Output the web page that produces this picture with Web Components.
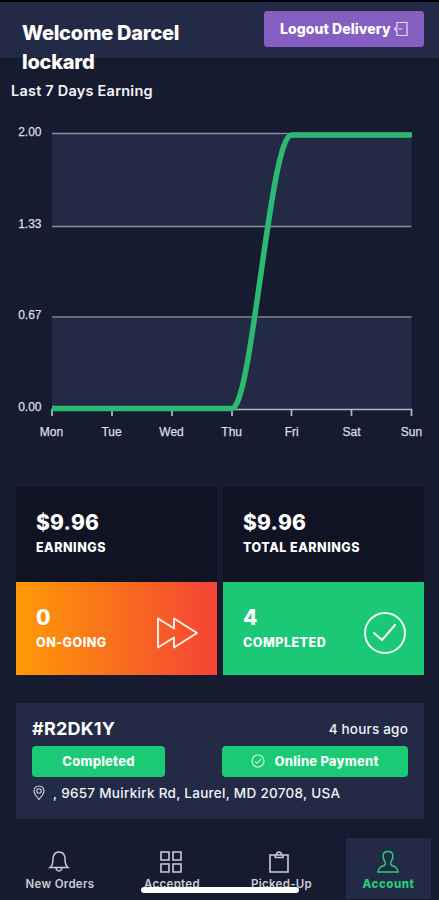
<!DOCTYPE html>
<html lang="en">
<head>
<meta charset="utf-8">
<title>Delivery account</title>
<style>
html,body{margin:0;padding:0}
body{background:#161b30;font-family:Inter,"Liberation Sans",sans-serif;color:#f2f3f8;width:439px;height:900px;overflow:hidden}
</style>
</head>
<body>
<delivery-app></delivery-app>
<script>
function define(name, html){
  const t=document.createElement('template');
  t.innerHTML=html;
  customElements.define(name, class extends HTMLElement{
    constructor(){super();this.attachShadow({mode:'open'}).appendChild(t.content.cloneNode(true));}
  });
}

define('app-header', `
<style>
:host{display:flex;justify-content:space-between;align-items:flex-start;box-sizing:border-box;height:58px;padding:11px 15px 0 22px;background:#232a45;border-top:2px solid #020308}
h1{margin:6px 0 0;width:190px;font-size:20px;line-height:28.5px;font-weight:800;letter-spacing:-.25px;color:#fff}
button{display:flex;align-items:center;gap:2px;box-sizing:border-box;width:160px;height:36px;margin:-2px 0 0;padding:0 15px 0 16px;border:0;border-radius:3px;background:#845fc1;color:#fff;font:800 14px/36px Inter,sans-serif;letter-spacing:.08px;white-space:nowrap}
svg{flex:none}
</style>
<h1><slot></slot></h1>
<button><slot name="action"></slot>
<svg width="15" height="16" viewBox="0 0 15 16" fill="none" stroke="#e6dcf5" stroke-width="1.2"><path d="M4 5V1.500h10v13H4V11M9.500 8H1.500M4.500 5L1.500 8l3 3"/></svg></button>`);

define('earnings-chart', `
<style>
:host{display:block}
h2{margin:0;padding:23px 0 0 11px;font-size:14.500px;line-height:20px;font-weight:600;letter-spacing:.22px}
svg{display:block}
text{font-family:"Liberation Sans",sans-serif;font-size:12px;fill:#dcdee6;stroke:#dcdee6;stroke-width:.25px}
.y{text-anchor:end}.x{text-anchor:middle;font-size:12px}
</style>
<h2><slot></slot></h2>
<svg width="439" height="350" viewBox="0 101 439 350">
<path d="M52 133H411.500V226H52zM52 317H411.500V409H52z" fill="#232a45"/>
<path d="M52 133.500H411.500M52 226.500H411.500" stroke="#878c9e" stroke-width="1.500"/>
<path d="M52 317H411.500" stroke="#666b79" stroke-width="2"/>
<path d="M52 416V409.500H411.500V416M112 409v7M172 409v7M232 409v7M291.500 409v7M351.500 409v7" fill="none" stroke="#b5b8c3" stroke-width="1.700"/>
<path d="M52 408.500H232C252 408.500 270 135 291.500 135H412" fill="none" stroke="#2cba73" stroke-width="5.500"/>
<text class="y" x="41.500" y="136">2.00</text><text class="y" x="41.500" y="227.500">1.33</text><text class="y" x="41.500" y="319">0.67</text><text class="y" x="41.500" y="411">0.00</text>
<text class="x" x="51.500" y="436">Mon</text><text class="x" x="111.500" y="436">Tue</text><text class="x" x="171.500" y="436">Wed</text><text class="x" x="231.700" y="436">Thu</text><text class="x" x="291.700" y="436">Fri</text><text class="x" x="351.500" y="436">Sat</text><text class="x" x="411.500" y="436">Sun</text>
</svg>`);

define('stat-card', `
<style>
:host{display:flex;box-sizing:border-box;justify-content:space-between;align-items:center;padding:0 18.500px var(--lift,0px) 20px;background:var(--card,#101323);color:#fff}
.v{font-size:21px;line-height:28px;font-weight:800;letter-spacing:.25px}
.l{font-size:12.500px;line-height:22px;font-weight:800;letter-spacing:.5px;white-space:nowrap}
</style>
<div><div class="v"><slot name="value"></slot></div><div class="l"><slot></slot></div></div><slot name="icon"></slot>`);

define('stat-grid', `
<style>
:host{display:grid;grid-template-columns:201px 201px;grid-template-rows:95px 93px;column-gap:6px;padding:36px 15px 0 16px}
</style><slot></slot>`);

define('status-badge', `
<style>
:host{display:flex;align-items:center;justify-content:center;gap:9px;box-sizing:border-box;height:31px;padding-bottom:1px;border-radius:4px;background:#1bca74;color:#f4fff8;font-size:13px;font-weight:800;letter-spacing:.2px;white-space:nowrap}
</style><slot name="icon"></slot><span><slot></slot></span>`);

define('order-card', `
<style>
:host{display:block;box-sizing:border-box;width:408px;height:116px;margin:28px 0 0 16px;padding:12px 16px 0;background:#232a45}
.row{display:flex;justify-content:space-between;align-items:center}
.id{font-size:18px;line-height:28px;font-weight:700;letter-spacing:.2px;color:#fff}
.time{font-size:13.500px;line-height:28px;font-weight:500;letter-spacing:.2px}
.badges{margin-top:3px}
.addr{display:flex;align-items:center;gap:7px;margin-top:5px;font-size:13.500px;line-height:22px;font-weight:500;letter-spacing:.29px;white-space:nowrap}
.one{width:133px}.two{width:186px}
</style>
<div class="row"><span class="id"><slot name="id"></slot></span><span class="time"><slot name="time"></slot></span></div>
<div class="row badges"><status-badge class="one"><slot name="status"></slot></status-badge>
<status-badge class="two"><svg slot="icon" width="14" height="14" viewBox="0 0 14 14" fill="none" stroke="#d5f7e4" stroke-width="1.100"><circle cx="7" cy="7" r="6"/><path d="M4 7.300l2 2 4.200-4.500"/></svg><slot name="payment"></slot></status-badge></div>
<div class="addr"><svg width="14" height="16" viewBox="0 0 14 16" fill="none" stroke="#d5d8e2" stroke-width="1.100"><path d="M7 14.500C5 11.500 2 9 2 6a5 5 0 0 1 10 0c0 3-3 5.500-5 8.500z"/><circle cx="7" cy="6" r="2.200"/></svg><span><slot></slot></span></div>`);

define('nav-item', `
<style>
:host{display:flex;flex-direction:column;align-items:center;box-sizing:border-box;padding-top:11px;color:#c9ccd6;font-size:11.500px;line-height:16px;font-weight:600;letter-spacing:.3px;white-space:nowrap}
:host([active]){background:#232a45;color:#20d07b;font-weight:800;letter-spacing:.5px}
.l{margin-top:2px}
</style><slot name="icon"></slot><div class="l"><slot></slot></div>`);

define('bottom-nav', `
<style>
:host{display:grid;grid-template-columns:110px 114px 105px 97px;height:61px;margin-top:19px;padding-left:5px;position:relative}
::slotted([active]){margin-left:12px;width:85px}
.home{position:absolute;left:141px;top:48.500px;width:158px;height:6px;border-radius:3px;background:#fff}
</style><slot></slot><div class="home"></div>`);

define('delivery-app', `
<style>:host{display:block;width:439px;height:900px;overflow:hidden}</style>
<app-header>Welcome Darcel lockard<span slot="action">Logout Delivery</span></app-header>
<earnings-chart>Last 7 Days Earning</earnings-chart>
<stat-grid>
<stat-card style="--lift:2px"><span slot="value">$9.96</span>EARNINGS</stat-card>
<stat-card style="--lift:2px"><span slot="value">$9.96</span>TOTAL EARNINGS</stat-card>
<stat-card style="--card:linear-gradient(90deg,#ff9a06,#f44336)"><span slot="value">0</span>ON-GOING
<svg slot="icon" width="44" height="36" viewBox="0 0 44 36" style="margin-top:8px" fill="none" stroke="#fff3e8" stroke-width="1.900" stroke-linejoin="round"><path d="M3 3.500L19 13.500V3.500L42 18 19 32.500V22.500L3 32.500z"/></svg></stat-card>
<stat-card style="--card:#1bc876"><span slot="value">4</span>COMPLETED
<svg slot="icon" width="42" height="42" viewBox="0 0 42 42" style="margin-top:9px" fill="none" stroke="#effff6" stroke-width="2" stroke-linecap="round" stroke-linejoin="round"><circle cx="21" cy="21" r="20"/><path d="M10 21l8 7 13-15"/></svg></stat-card>
</stat-grid>
<order-card><span slot="id">#R2DK1Y</span><span slot="time">4 hours ago</span><span slot="status">Completed</span><span slot="payment">Online Payment</span>, 9657 Muirkirk Rd, Laurel, MD 20708, USA</order-card>
<bottom-nav>
<nav-item><svg slot="icon" width="24" height="25" viewBox="0 0 24 25" style="margin-left:-3px" fill="none" stroke="#c9ccd6" stroke-width="1.500"><path d="M3 18.500c2.500-2 3-4 3-8 0-5 2.500-7.500 6-7.500s6 2.500 6 7.500c0 4 .5 6 3 8zM9 18.500c.3 4.500 5.700 4.500 6 0"/></svg>New Orders</nav-item>
<nav-item><svg slot="icon" width="24" height="25" viewBox="0 0 24 25" style="margin-left:-3px" fill="none" stroke="#c9ccd6" stroke-width="1.600"><path d="M2 3h8v8H2zM14 3h8v8h-8zM2 15h8v8H2zM14 15h8v8h-8z"/></svg>Accepted</nav-item>
<nav-item><svg slot="icon" width="24" height="25" viewBox="0 0 24 25" style="margin-left:-5px" fill="none" stroke="#c9ccd6" stroke-width="1.600"><path d="M8 6H3v17h18V6h-5M8 8.500V6h8v2.500H8M9.500 6c0-4 5-4 5 0"/></svg>Picked-Up</nav-item>
<nav-item active><svg slot="icon" width="24" height="25" viewBox="0 0 24 25" style="margin-left:-2px" fill="none" stroke="#20cf7b" stroke-width="1.500"><path d="M9 13C6.500 9 5.500 2.500 12 2.500S17.500 9 15 13c-.8 1.500-.5 2.800 1 3.500 3 1.300 5.500 2 6 6.500h-20c.5-4.500 3-5.200 6-6.500 1.500-.7 1.800-2 1-3.500z"/></svg>Account</nav-item>
</bottom-nav>`);
</script>
</body>
</html>
